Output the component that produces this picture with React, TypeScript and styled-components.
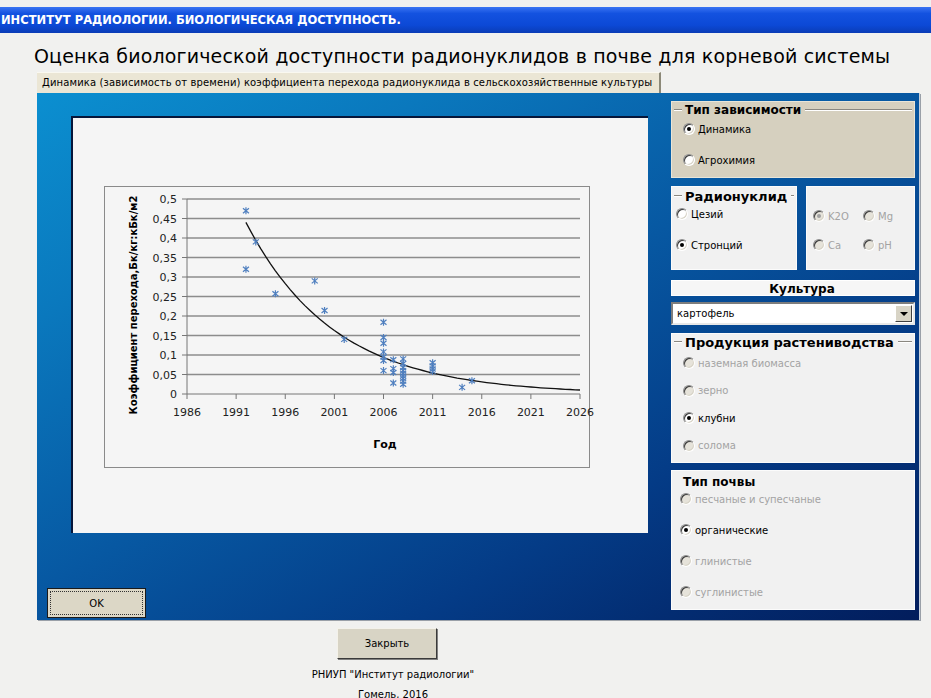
import React from 'react';
import styled, { createGlobalStyle } from 'styled-components';

const GlobalStyle = createGlobalStyle`
  body {
    margin: 0;
    background: #f1f1ef;
    font-family: "DejaVu Sans", Verdana, sans-serif;
    color: #000;
  }
`;

const TitleBar = styled.div`
  margin-top: 7px;
  height: 26px;
  line-height: 26px;
  padding-left: 1px;
  background: linear-gradient(#3a74f2 0%, #1352e0 25%, #0c49d6 70%, #0a3cb6 100%);
  color: #fff;
  font-weight: bold;
  font-size: 11.5px;
  white-space: nowrap;
  overflow: hidden;
`;

const Heading = styled.h1`
  margin: 10px 0 3px 34px;
  font-size: 19px;
  letter-spacing: 0.16px;
  line-height: 26px;
  font-weight: normal;
  white-space: nowrap;
`;

const TabStrip = styled.div`
  display: flex;
  margin-left: 37px;
`;

const Tab = styled.div`
  height: 20px;
  line-height: 20px;
  padding: 0 7px 0 5px;
  background: #ebe6d5;
  border-top: 1px solid #faf8f0;
  border-right: 2px solid #8c8978;
  font-size: 10px;
  letter-spacing: 0.13px;
  white-space: nowrap;
`;

const Panel = styled.div`
  display: flex;
  margin-left: 37px;
  width: 883px;
  height: 527px;
  box-sizing: border-box;
  border-right: 1px solid #c8d0dc;
  background: linear-gradient(150deg, #0b8fd0 0%, #0a78bd 22%, #0758a2 48%, #043b86 72%, #021d5c 100%);
  box-shadow: 1px 1px 0 #9aa0a8;
`;

const LeftArea = styled.div`
  width: 634px;
  display: flex;
  flex-direction: column;
`;

const ChartFrame = styled.div`
  margin: 23px 0 0 34px;
  width: 577px;
  height: 417px;
  box-sizing: border-box;
  background: #f5f5f5;
  border-top: 2px solid #06163a;
  border-left: 2px solid #06163a;
  padding: 68px 0 0 31px;
`;

const ChartBox = styled.div`
  width: 486px;
  height: 282px;
  box-sizing: border-box;
  border: 1px solid #8a8a8a;
  background: #f5f5f5;
  & > svg {
    overflow: visible;
  }
`;

const OkButton = styled.button`
  margin: auto 0 2px 10px;
  width: 99px;
  height: 30px;
  background: #dcd7c6;
  border: 1px solid #1a1a1a;
  outline: 1px dotted #333;
  outline-offset: -4px;
  font-family: "DejaVu Sans", sans-serif;
  font-size: 10px;
  color: #000;
`;

const Side = styled.div`
  width: 244px;
  padding-top: 8px;
  display: flex;
  flex-direction: column;
`;

const Group = styled.div<{ $bg?: string; $h: number; $w?: number }>`
  box-sizing: border-box;
  height: ${(p) => p.$h}px;
  width: ${(p) => (p.$w ? `${p.$w}px` : 'auto')};
  background: ${(p) => p.$bg || '#f1f1f1'};
  border: 1px solid ${(p) => (p.$bg ? '#e9e5d8' : '#fbfbfb')};
  padding: 0 2px;
  display: flex;
  flex-direction: column;
`;

const Legend = styled.div<{ $size?: number; $h?: number }>`
  display: flex;
  align-items: center;
  height: ${(p) => p.$h || 16}px;
  font-weight: bold;
  font-size: ${(p) => p.$size || 12}px;
  white-space: nowrap;
  &::before,
  &::after {
    content: '';
    height: 0;
    border-top: 1px solid #8a8780;
    border-bottom: 1px solid #fff;
  }
  &::before {
    width: 8px;
    margin-right: 3px;
  }
  &::after {
    flex: 1;
    margin-left: 4px;
  }
`;

const PlainTitle = styled.div`
  margin: 3px 0 0 9px;
  height: 16px;
  line-height: 16px;
  font-weight: bold;
  font-size: 12px;
`;

const RadioList = styled.div<{ $top: number; $gap: number; $left: number }>`
  display: flex;
  flex-direction: column;
  gap: ${(p) => p.$gap}px;
  margin-top: ${(p) => p.$top}px;
  padding-left: ${(p) => p.$left}px;
`;

const RadioGrid = styled.div`
  display: grid;
  grid-template-columns: 50px 50px;
  row-gap: 15px;
  margin-top: 22px;
  padding-left: 4px;
`;

const Row = styled.label<{ $disabled?: boolean }>`
  display: flex;
  align-items: center;
  gap: 3px;
  height: 14px;
  font-size: 10px;
  white-space: nowrap;
  color: ${(p) => (p.$disabled ? '#a3a3a3' : '#000')};
`;

const RadioDot = styled.span<{ $checked?: boolean; $disabled?: boolean }>`
  display: inline-flex;
  align-items: center;
  justify-content: center;
  width: 12px;
  height: 12px;
  box-sizing: border-box;
  border-radius: 50%;
  border: 1px solid;
  border-color: #8e8e8e #fff #fff #8e8e8e;
  box-shadow: inset 1px 1px 0 #3c3c3c, inset -1px -1px 0 #d8d4c8;
  background: ${(p) => (p.$disabled ? '#e6e3da' : '#fff')};
  &::after {
    content: '';
    width: 4px;
    height: 4px;
    border-radius: 50%;
    background: ${(p) => (p.$checked ? (p.$disabled ? '#a0a0a0' : '#000') : 'transparent')};
  }
`;

const Pair = styled.div`
  display: flex;
  gap: 9px;
  margin-top: 8px;
`;

const CaptionBox = styled.div`
  margin-top: 10px;
  height: 16px;
  line-height: 16px;
  background: #f6f6f6;
  border: 1px solid #fff;
  box-sizing: border-box;
  padding-left: 18px;
  text-align: center;
  font-weight: bold;
  font-size: 12px;
`;

const Select = styled.div`
  margin-top: 6px;
  height: 23px;
  box-sizing: border-box;
  display: flex;
  align-items: center;
  background: #fff;
  border: 2px solid;
  border-color: #7d7d7d #e8e8e8 #e8e8e8 #7d7d7d;
  font-size: 10px;
  padding-left: 4px;
`;

const SelectText = styled.span`
  flex: 1;
`;

const DropButton = styled.span`
  width: 17px;
  height: 17px;
  margin-right: 1px;
  box-sizing: border-box;
  display: flex;
  align-items: center;
  justify-content: center;
  background: #d8d4c6;
  border: 1px solid;
  border-color: #fff #404040 #404040 #fff;
  &::after {
    content: '';
    border-left: 4px solid transparent;
    border-right: 4px solid transparent;
    border-top: 4px solid #000;
  }
`;

const Footer = styled.div`
  width: 786px;
  display: flex;
  flex-direction: column;
  align-items: center;
  font-size: 10px;
`;

const CloseButton = styled.button`
  margin-top: 8px;
  margin-left: -12px;
  width: 100px;
  height: 31px;
  background: #d8d4c5;
  border: 1px solid;
  border-color: #f4f2ea #3a3a3a #3a3a3a #f4f2ea;
  box-shadow: 1px 1px 0 #808080;
  font-family: "DejaVu Sans", sans-serif;
  font-size: 10px;
  color: #000;
`;

const FooterLine = styled.div<{ $top: number }>`
  margin-top: ${(p) => p.$top}px;
  line-height: 13px;
`;

type Point = [number, number];

const points: Point[] = [
  [1992, 0.47], [1992, 0.32], [1993, 0.39], [1995, 0.257], [1999, 0.29],
  [2000, 0.214], [2002, 0.14],
  [2006, 0.184], [2006, 0.145], [2006, 0.13], [2006, 0.108], [2006, 0.095], [2006, 0.086], [2006, 0.06],
  [2007, 0.088], [2007, 0.065], [2007, 0.055], [2007, 0.028],
  [2008, 0.09], [2008, 0.078], [2008, 0.068], [2008, 0.06], [2008, 0.053], [2008, 0.046],
  [2008, 0.04], [2008, 0.033], [2008, 0.025],
  [2011, 0.08], [2011, 0.072], [2011, 0.064], [2011, 0.058],
  [2014, 0.017], [2015, 0.034],
];

const px = (year: number) => 83 + (year - 1986) * 9.825;
const py = (v: number) => 208 - v * 390;

function Chart() {
  const yTicks = Array.from({ length: 11 }, (_, i) => i * 0.05);
  const xTicks = Array.from({ length: 9 }, (_, i) => 1986 + i * 5);
  let curve = '';
  for (let t = 1992; t <= 2026; t += 0.5) {
    const v = 0.44 * Math.exp(-0.1105 * (t - 1992));
    curve += `${curve ? 'L' : 'M'}${px(t).toFixed(1)},${py(v).toFixed(1)} `;
  }
  return (
    <svg width="484" height="280" viewBox="1 1 484 280" fontFamily="DejaVu Sans, sans-serif">
      {yTicks.map((v) => (
        <g key={v}>
          {v > 0 && <line x1={83} x2={476} y1={py(v)} y2={py(v)} stroke="#8c8c8c" strokeWidth={1.3} />}
          <line x1={78} x2={83} y1={py(v)} y2={py(v)} stroke="#777" />
          <text x={73} y={py(v) + 4} fontSize={11} textAnchor="end" fill="#222">
            {v === 0 ? '0' : String(Math.round(v * 100) / 100).replace('.', ',')}
          </text>
        </g>
      ))}
      <line x1={83} x2={83} y1={py(0.5)} y2={py(0)} stroke="#777" />
      <line x1={83} x2={476} y1={py(0)} y2={py(0)} stroke="#777" />
      {xTicks.map((y) => (
        <g key={y}>
          <line x1={px(y)} x2={px(y)} y1={py(0)} y2={py(0) + 5} stroke="#777" />
          <text x={px(y)} y={230} fontSize={11} textAnchor="middle" fill="#222">{y}</text>
        </g>
      ))}
      <path d={curve} fill="none" stroke="#111" strokeWidth={1.3} />
      {points.map(([t, v], i) => (
        <path
          key={i}
          transform={`translate(${px(t)},${py(v)})`}
          d="M-3,-2.5L3,2.5M3,-2.5L-3,2.5M0,-3.5L0,3.5"
          stroke="#4f7fbf"
          strokeWidth={1.2}
        />
      ))}
      <text x={281} y={262} fontSize={11} fontWeight="bold" textAnchor="middle">Год</text>
      <text transform="translate(33,119) rotate(-90)" fontSize={10} fontWeight="bold" textAnchor="middle">
        Коэффициент перехода,Бк/кг:кБк/м2
      </text>
    </svg>
  );
}

function Radio({ label, checked, disabled }: { label: string; checked?: boolean; disabled?: boolean }) {
  return (
    <Row $disabled={disabled}>
      <RadioDot $checked={checked} $disabled={disabled} />
      {label}
    </Row>
  );
}

export default function App() {
  return (
    <>
      <GlobalStyle />
      <TitleBar>ИНСТИТУТ РАДИОЛОГИИ. БИОЛОГИЧЕСКАЯ ДОСТУПНОСТЬ.</TitleBar>
      <Heading>Оценка биологической доступности радионуклидов в почве для корневой системы</Heading>
      <TabStrip>
        <Tab>Динамика (зависимость от времени) коэффициента перехода радионуклида в сельскохозяйственные культуры</Tab>
      </TabStrip>
      <Panel>
        <LeftArea>
          <ChartFrame>
            <ChartBox>
              <Chart />
            </ChartBox>
          </ChartFrame>
          <OkButton type="button">OK</OkButton>
        </LeftArea>
        <Side>
          <Group $bg="#d6d0bf" $h={77}>
            <Legend>Тип зависимости</Legend>
            <RadioList $top={4} $gap={17} $left={9}>
              <Radio label="Динамика" checked />
              <Radio label="Агрохимия" />
            </RadioList>
          </Group>
          <Pair>
            <Group $h={84} $w={126}>
              <Legend $size={13} $h={18}>Радионуклид</Legend>
              <RadioList $top={2} $gap={17} $left={2}>
                <Radio label="Цезий" />
                <Radio label="Стронций" checked />
              </RadioList>
            </Group>
            <Group $h={84} $w={109}>
              <RadioGrid>
                <Radio label="K2O" checked disabled />
                <Radio label="Mg" disabled />
                <Radio label="Ca" disabled />
                <Radio label="pH" disabled />
              </RadioGrid>
            </Group>
          </Pair>
          <CaptionBox>Культура</CaptionBox>
          <Select>
            <SelectText>картофель</SelectText>
            <DropButton />
          </Select>
          <Group $h={130} style={{ marginTop: 8 }}>
            <Legend $size={13}>Продукция растениводства</Legend>
            <RadioList $top={6} $gap={13.5} $left={9}>
              <Radio label="наземная биомасса" disabled />
              <Radio label="зерно" disabled />
              <Radio label="клубни" checked />
              <Radio label="солома" disabled />
            </RadioList>
          </Group>
          <Group $h={140} style={{ marginTop: 7 }}>
            <PlainTitle>Тип почвы</PlainTitle>
            <RadioList $top={2} $gap={17} $left={6}>
              <Radio label="песчаные и супесчаные" disabled />
              <Radio label="органические" checked />
              <Radio label="глинистые" disabled />
              <Radio label="суглинистые" disabled />
            </RadioList>
          </Group>
        </Side>
      </Panel>
      <Footer>
        <CloseButton type="button">Закрыть</CloseButton>
        <FooterLine $top={9}>РНИУП "Институт радиологии"</FooterLine>
        <FooterLine $top={7}>Гомель, 2016</FooterLine>
      </Footer>
    </>
  );
}
